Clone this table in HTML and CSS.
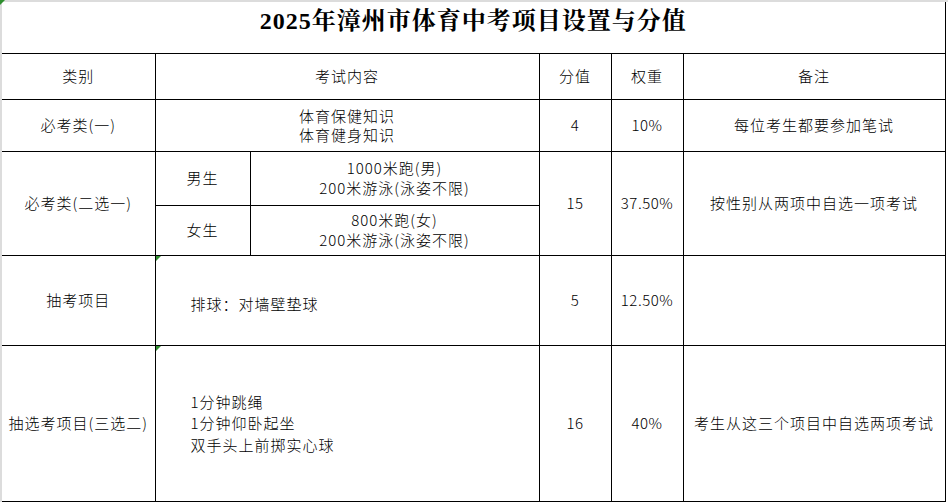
FILE: index.html
```html
<!DOCTYPE html>
<html lang="zh-CN">
<head>
<meta charset="utf-8">
<title>2025年漳州市体育中考项目设置与分值</title>
<link rel="stylesheet" href="styles.css">
</head>
<body>
<div class="sheet">
  <table class="grid">
    <colgroup>
      <col class="c1"><col class="c2a"><col class="c2b"><col class="c3"><col class="c4"><col class="c5">
    </colgroup>
    <tr class="r-title">
      <td class="title mark" colspan="6">2025年漳州市体育中考项目设置与分值</td>
    </tr>
    <tr class="r-head">
      <td class="first">类别</td>
      <td colspan="2">考试内容</td>
      <td>分值</td>
      <td>权重</td>
      <td>备注</td>
    </tr>
    <tr class="r-1">
      <td class="first">必考类(一)</td>
      <td colspan="2" class="lh18">体育保健知识<br>体育健身知识</td>
      <td class="num">4</td>
      <td class="num">10%</td>
      <td>每位考生都要参加笔试</td>
    </tr>
    <tr class="r-2a">
      <td class="first" rowspan="2">必考类(二选一)</td>
      <td>男生</td>
      <td class="lh20">1000米跑(男)<br>200米游泳(泳姿不限)</td>
      <td class="num" rowspan="2">15</td>
      <td class="num" rowspan="2">37.50%</td>
      <td rowspan="2">按性别从两项中自选一项考试</td>
    </tr>
    <tr class="r-2b">
      <td>女生</td>
      <td class="lh20">800米跑(女)<br>200米游泳(泳姿不限)</td>
    </tr>
    <tr class="r-3">
      <td class="first">抽考项目</td>
      <td colspan="2" class="left mark low">排球：对墙壁垫球</td>
      <td class="num">5</td>
      <td class="num">12.50%</td>
      <td></td>
    </tr>
    <tr class="r-4">
      <td class="first selected">抽选考项目(三选二)</td>
      <td colspan="2" class="left mark lh21">1分钟跳绳<br>1分钟仰卧起坐<br>双手头上前掷实心球</td>
      <td class="num">16</td>
      <td class="num">40%</td>
      <td>考生从这三个项目中自选两项考试</td>
    </tr>
  </table>
</div>
</body>
</html>
```

FILE: styles.css
```css
html, body {
  margin: 0;
  padding: 0;
  background: #ffffff;
}

.sheet {
  width: 946px;
  border-top: 2px solid #dcdcdc;
  border-left: 2px solid #dcdcdc;
  font-family: "Noto Sans CJK SC", "Liberation Sans", sans-serif;
  font-weight: 300;
  font-size: 15px;
  color: #000;
}

.grid {
  border-collapse: collapse;
  table-layout: fixed;
  width: 943px;
}

.c1 { width: 153px; }
.c2a { width: 95px; }
.c2b { width: 289px; }
.c3 { width: 72px; }
.c4 { width: 72px; }
.c5 { width: 262px; }

.grid td {
  border: 1px solid #000;
  text-align: center;
  vertical-align: middle;
  padding: 0;
  letter-spacing: 1px;
  line-height: 18px;
  white-space: nowrap;
  position: relative;
}

.grid td.first {
  border-left: none;
}

.grid td.num {
  letter-spacing: 0.5px;
}

.grid td.title {
  border-top: none;
  border-left: none;
  vertical-align: top;
  padding-top: 4px;
  font-family: "Liberation Serif", "Noto Serif CJK SC", "Noto Sans CJK SC", serif;
  font-weight: 700;
  font-size: 24px;
  line-height: 30px;
  letter-spacing: 1px;
}

.r-title { height: 51px; }
.r-head { height: 46px; }
.r-1 { height: 52px; }
.r-2a { height: 54px; }
.r-2b { height: 50px; }
.r-3 { height: 90px; }
.r-4 { height: 156px; }

.grid td.lh18 { line-height: 19.5px; }
.grid td.lh20 { line-height: 20px; }
.grid td.lh21 { line-height: 21.5px; }

.grid td.left {
  text-align: left;
  padding-left: 35px;
}

.grid td.low {
  padding-top: 8px;
}

.grid td.mark::before {
  content: "";
  position: absolute;
  left: 0;
  top: 0;
  border-top: 5px solid #2f8f2f;
  border-right: 5px solid transparent;
}

.grid td.title.mark::before {
  left: -2px;
  top: -2px;
}

.grid td.selected {
  box-shadow: -2px 0 0 #4c9b3a;
}
```
